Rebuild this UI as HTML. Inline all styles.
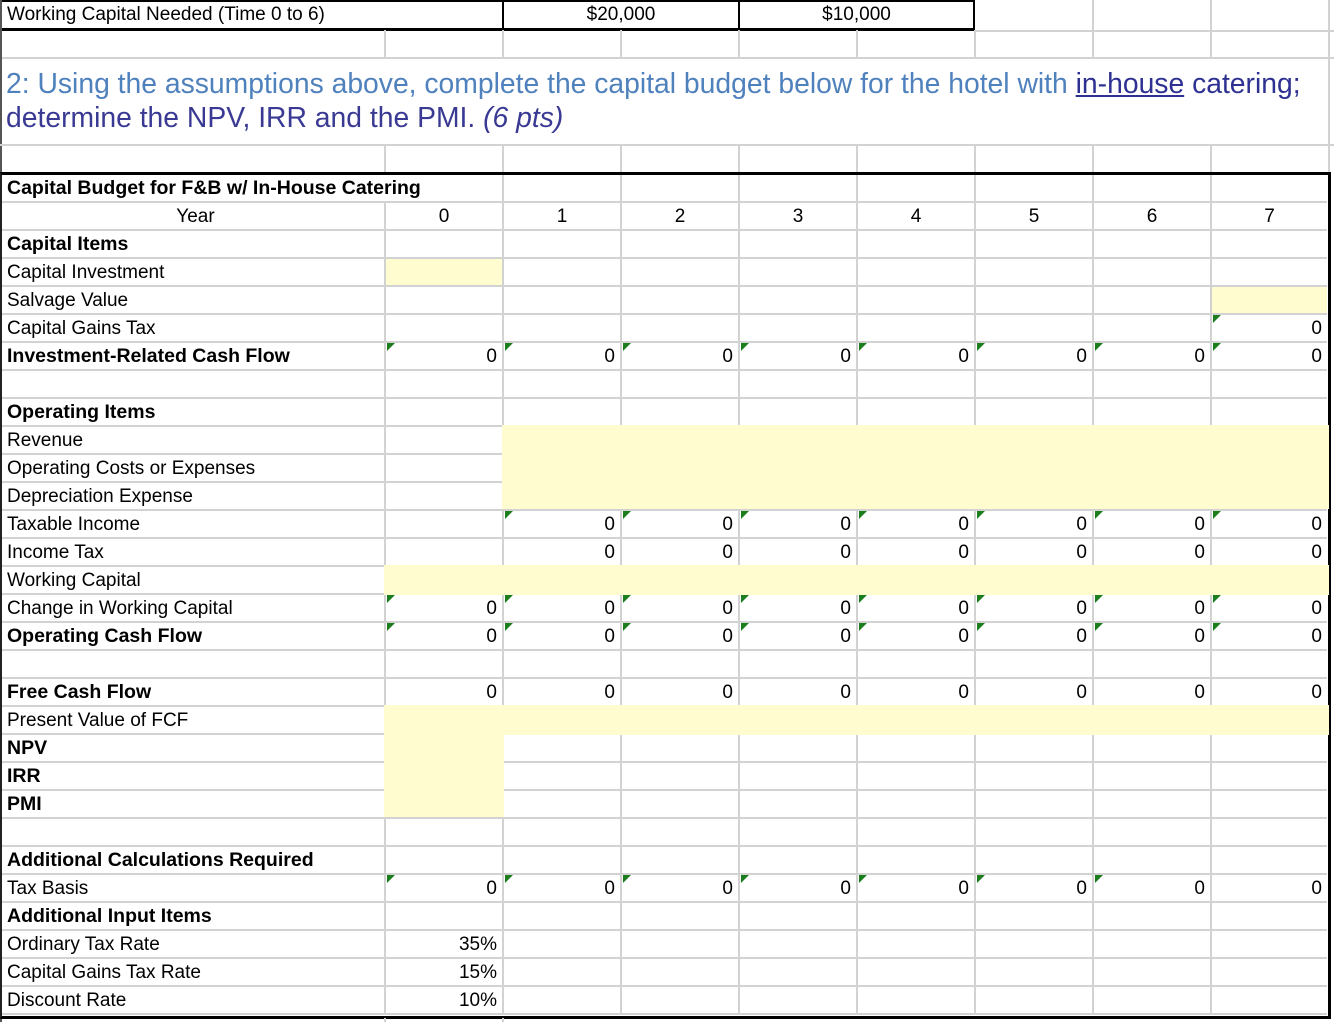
<!DOCTYPE html>
<html><head><meta charset="utf-8"><style>
*{margin:0;padding:0;box-sizing:border-box}
body{width:1334px;height:1022px;background:#fff;position:relative;overflow:hidden;font-family:"Liberation Sans",Arial,sans-serif;color:#000}
.abs{position:absolute}
.g{display:grid;grid-template-columns:382px repeat(7,116px) 115px;grid-auto-rows:26px;column-gap:2px;row-gap:2px;background:#d2d2d2}
.c{background:#fff;font-size:19px;letter-spacing:0;line-height:27px;padding:0 5px;white-space:nowrap;position:relative}
.r{text-align:right}
.ctr{text-align:center}
.b{font-weight:bold;font-size:19.5px;letter-spacing:0}
.y{background:#fffdd0}
.t::before{content:"";position:absolute;left:1px;top:0;border-top:8px solid #1b7d1b;border-right:8px solid transparent}
.hl{position:absolute;background:#d2d2d2}
.tt{position:absolute;font-size:19px;line-height:27px;white-space:nowrap}
</style></head><body>
<!-- top row -->
<div class="abs" style="left:0;top:0;width:975px;height:31px;border:2px solid #000;border-bottom-width:3px"></div>
<div class="abs" style="left:502px;top:0;width:2px;height:30px;background:#000"></div>
<div class="abs" style="left:738px;top:0;width:2px;height:30px;background:#000"></div>
<div class="tt" style="left:7px;top:1px">Working Capital Needed (Time 0 to 6)</div>
<div class="tt" style="left:504px;top:1px;width:234px;text-align:center">$20,000</div>
<div class="tt" style="left:740px;top:1px;width:233px;text-align:center">$10,000</div>
<div class="hl" style="left:975px;top:30px;width:359px;height:2px"></div>
<div class="hl" style="left:1092px;top:0;width:2px;height:30px"></div>
<div class="hl" style="left:1210px;top:0;width:2px;height:30px"></div>
<div class="hl" style="left:1328px;top:0;width:2px;height:60px"></div>
<!-- row 2 -->
<div class="hl" style="left:384px;top:30px;width:2px;height:28px"></div>
<div class="hl" style="left:502px;top:30px;width:2px;height:28px"></div>
<div class="hl" style="left:620px;top:30px;width:2px;height:28px"></div>
<div class="hl" style="left:738px;top:30px;width:2px;height:28px"></div>
<div class="hl" style="left:856px;top:30px;width:2px;height:28px"></div>
<div class="hl" style="left:974px;top:30px;width:2px;height:28px"></div>
<div class="hl" style="left:1092px;top:30px;width:2px;height:28px"></div>
<div class="hl" style="left:1210px;top:30px;width:2px;height:28px"></div>
<div class="hl" style="left:0;top:57px;width:1334px;height:2px"></div>
<div class="abs" style="left:0;top:0;width:2px;height:1022px;background:#555"></div>
<!-- heading -->
<div class="abs" style="left:6px;top:66px;font-size:28.3px;line-height:34px;white-space:nowrap;color:#4f81bd">2: Using the assumptions above, complete the capital budget below for the hotel with <span style="color:#2e3192;text-decoration:underline">in-house</span> <span style="color:#2e3192">catering;</span></div>
<div class="abs" style="left:6px;top:100px;font-size:28.3px;line-height:34px;white-space:nowrap;color:#3a3a94">determine the NPV, IRR and the PMI. <i>(6 pts)</i></div>
<div class="hl" style="left:1328px;top:58px;width:2px;height:87px"></div>
<!-- row before table -->
<div class="hl" style="left:0;top:144px;width:1334px;height:2px"></div>
<div class="hl" style="left:384px;top:145px;width:2px;height:28px"></div>
<div class="hl" style="left:502px;top:145px;width:2px;height:28px"></div>
<div class="hl" style="left:620px;top:145px;width:2px;height:28px"></div>
<div class="hl" style="left:738px;top:145px;width:2px;height:28px"></div>
<div class="hl" style="left:856px;top:145px;width:2px;height:28px"></div>
<div class="hl" style="left:974px;top:145px;width:2px;height:28px"></div>
<div class="hl" style="left:1092px;top:145px;width:2px;height:28px"></div>
<div class="hl" style="left:1210px;top:145px;width:2px;height:28px"></div>
<div class="hl" style="left:1328px;top:145px;width:2px;height:28px"></div>
<!-- main table -->
<div class="abs" style="left:0;top:172px;width:1331px;height:847px;border-top:3px solid #000;border-right:3px solid #000;border-bottom:3px solid #000;border-left:2px solid #222"></div>
<div class="abs g" style="left:2px;top:175px;width:1325px;height:840px">
<div class="c b" style="grid-column:span 2">Capital Budget for F&amp;B w/ In-House Catering</div><div class="c"></div><div class="c"></div><div class="c"></div><div class="c"></div><div class="c"></div><div class="c"></div><div class="c"></div>
<div class="c ctr" style="padding-left:10px">Year</div><div class="c ctr">0</div><div class="c ctr">1</div><div class="c ctr">2</div><div class="c ctr">3</div><div class="c ctr">4</div><div class="c ctr">5</div><div class="c ctr">6</div><div class="c ctr">7</div>
<div class="c b">Capital Items</div><div class="c"></div><div class="c"></div><div class="c"></div><div class="c"></div><div class="c"></div><div class="c"></div><div class="c"></div><div class="c"></div>
<div class="c">Capital Investment</div><div class="c y"></div><div class="c"></div><div class="c"></div><div class="c"></div><div class="c"></div><div class="c"></div><div class="c"></div><div class="c"></div>
<div class="c">Salvage Value</div><div class="c"></div><div class="c"></div><div class="c"></div><div class="c"></div><div class="c"></div><div class="c"></div><div class="c"></div><div class="c y"></div>
<div class="c">Capital Gains Tax</div><div class="c"></div><div class="c"></div><div class="c"></div><div class="c"></div><div class="c"></div><div class="c"></div><div class="c"></div><div class="c r t">0</div>
<div class="c b">Investment-Related Cash Flow</div><div class="c r t">0</div><div class="c r t">0</div><div class="c r t">0</div><div class="c r t">0</div><div class="c r t">0</div><div class="c r t">0</div><div class="c r t">0</div><div class="c r t">0</div>
<div class="c"></div><div class="c"></div><div class="c"></div><div class="c"></div><div class="c"></div><div class="c"></div><div class="c"></div><div class="c"></div><div class="c"></div>
<div class="c b">Operating Items</div><div class="c"></div><div class="c"></div><div class="c"></div><div class="c"></div><div class="c"></div><div class="c"></div><div class="c"></div><div class="c"></div>
<div class="c">Revenue</div><div class="c"></div><div class="c y" style="grid-column:3/10;grid-row:span 3;margin:-2px -2px 0 -2px"></div>
<div class="c">Operating Costs or Expenses</div><div class="c"></div>
<div class="c">Depreciation Expense</div><div class="c"></div>
<div class="c">Taxable Income</div><div class="c"></div><div class="c r t">0</div><div class="c r t">0</div><div class="c r t">0</div><div class="c r t">0</div><div class="c r t">0</div><div class="c r t">0</div><div class="c r t">0</div>
<div class="c">Income Tax</div><div class="c"></div><div class="c r">0</div><div class="c r">0</div><div class="c r">0</div><div class="c r">0</div><div class="c r">0</div><div class="c r">0</div><div class="c r">0</div>
<div class="c">Working Capital</div><div class="c y" style="grid-column:2/10;margin:-2px -2px -2px -2px"></div>
<div class="c">Change in Working Capital</div><div class="c r t">0</div><div class="c r t">0</div><div class="c r t">0</div><div class="c r t">0</div><div class="c r t">0</div><div class="c r t">0</div><div class="c r t">0</div><div class="c r t">0</div>
<div class="c b">Operating Cash Flow</div><div class="c r t">0</div><div class="c r t">0</div><div class="c r t">0</div><div class="c r t">0</div><div class="c r t">0</div><div class="c r t">0</div><div class="c r t">0</div><div class="c r t">0</div>
<div class="c"></div><div class="c"></div><div class="c"></div><div class="c"></div><div class="c"></div><div class="c"></div><div class="c"></div><div class="c"></div><div class="c"></div>
<div class="c b">Free Cash Flow</div><div class="c r">0</div><div class="c r">0</div><div class="c r">0</div><div class="c r">0</div><div class="c r">0</div><div class="c r">0</div><div class="c r">0</div><div class="c r">0</div>
<div class="c">Present Value of FCF</div><div class="c y" style="grid-column:2/10;margin:-2px -2px -2px -2px"></div>
<div class="c b">NPV</div><div class="c y" style="grid-row:span 3;margin:-2px -2px 0 -2px"></div><div class="c"></div><div class="c"></div><div class="c"></div><div class="c"></div><div class="c"></div><div class="c"></div><div class="c"></div>
<div class="c b">IRR</div><div class="c"></div><div class="c"></div><div class="c"></div><div class="c"></div><div class="c"></div><div class="c"></div><div class="c"></div>
<div class="c b">PMI</div><div class="c"></div><div class="c"></div><div class="c"></div><div class="c"></div><div class="c"></div><div class="c"></div><div class="c"></div>
<div class="c"></div><div class="c"></div><div class="c"></div><div class="c"></div><div class="c"></div><div class="c"></div><div class="c"></div><div class="c"></div><div class="c"></div>
<div class="c b">Additional Calculations Required</div><div class="c"></div><div class="c"></div><div class="c"></div><div class="c"></div><div class="c"></div><div class="c"></div><div class="c"></div><div class="c"></div>
<div class="c">Tax Basis</div><div class="c r t">0</div><div class="c r t">0</div><div class="c r t">0</div><div class="c r t">0</div><div class="c r t">0</div><div class="c r t">0</div><div class="c r t">0</div><div class="c r">0</div>
<div class="c b">Additional Input Items</div><div class="c"></div><div class="c"></div><div class="c"></div><div class="c"></div><div class="c"></div><div class="c"></div><div class="c"></div><div class="c"></div>
<div class="c">Ordinary Tax Rate</div><div class="c r">35%</div><div class="c"></div><div class="c"></div><div class="c"></div><div class="c"></div><div class="c"></div><div class="c"></div><div class="c"></div>
<div class="c">Capital Gains Tax Rate</div><div class="c r">15%</div><div class="c"></div><div class="c"></div><div class="c"></div><div class="c"></div><div class="c"></div><div class="c"></div><div class="c"></div>
<div class="c">Discount Rate</div><div class="c r">10%</div><div class="c"></div><div class="c"></div><div class="c"></div><div class="c"></div><div class="c"></div><div class="c"></div><div class="c"></div>
</div>
<div class="hl" style="left:384px;top:1018px;width:2px;height:4px"></div>
<div class="hl" style="left:502px;top:1018px;width:2px;height:4px"></div>
</body></html>
